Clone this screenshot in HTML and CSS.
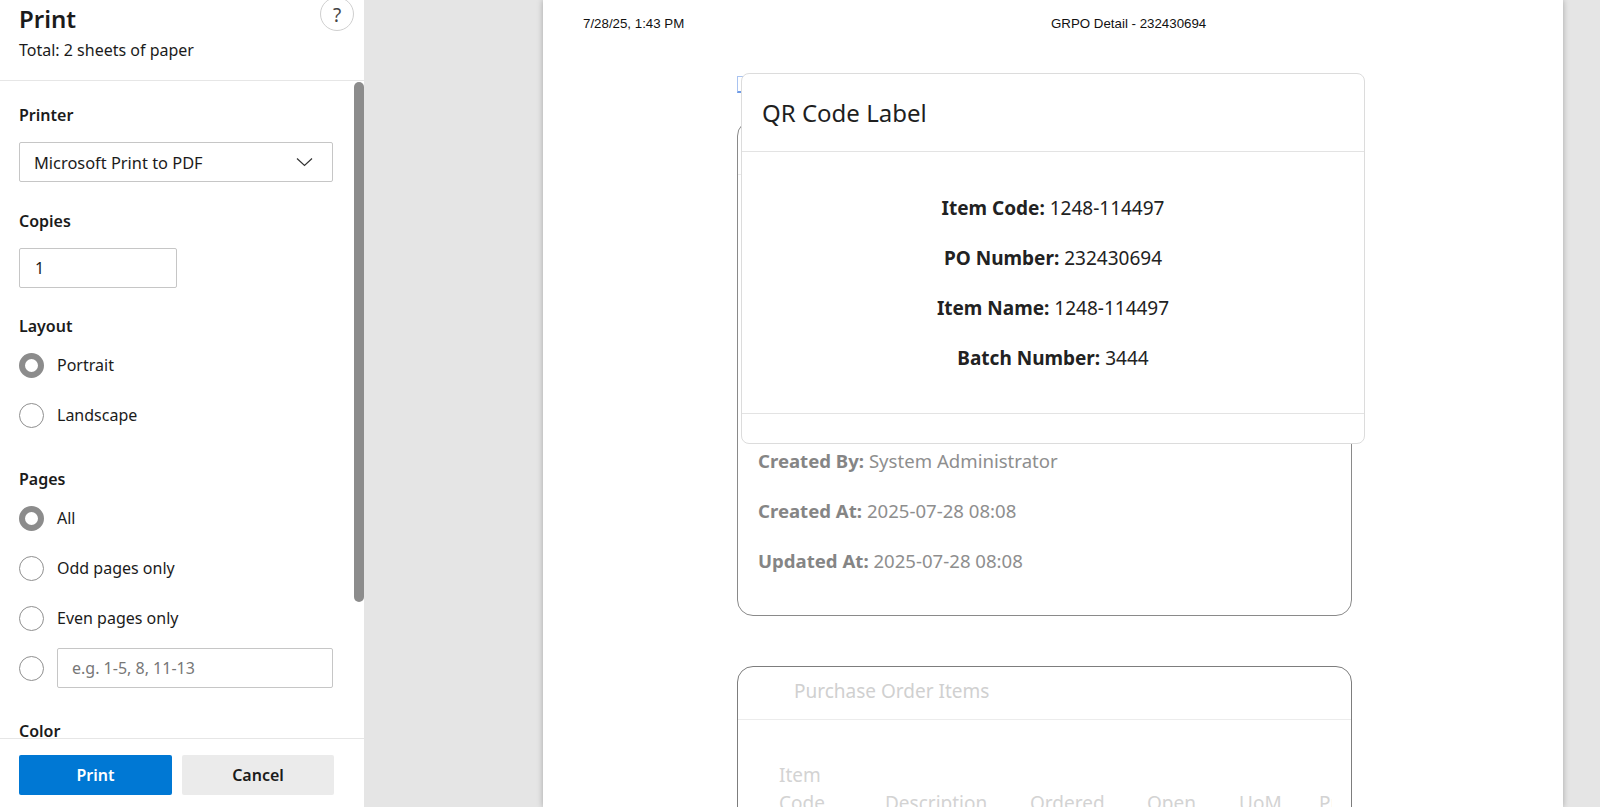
FILE: index.html
```html
<!DOCTYPE html>
<html lang="en">
<head>
<meta charset="utf-8">
<title>Print</title>
<link rel="stylesheet" href="styles.css">
</head>
<body>
<div class="app">
  <aside class="sidebar">
    <header class="side-head">
      <div class="head-text">
        <h1 class="title">Print</h1>
        <div class="subtitle">Total: 2 sheets of paper</div>
      </div>
      <button class="help" type="button">?</button>
    </header>
    <div class="side-body">
      <div class="settings">
        <section class="group first">
          <div class="label">Printer</div>
          <div class="select">
            <span>Microsoft Print to PDF</span>
            <svg class="chev" width="17" height="10" viewBox="0 0 17 10"><path d="M1 1.5 L8.5 8.5 L16 1.5" fill="none" stroke="#333" stroke-width="1.2"/></svg>
          </div>
        </section>
        <section class="group">
          <div class="label">Copies</div>
          <div class="copies">1</div>
        </section>
        <section class="group layout">
          <div class="label tight">Layout</div>
          <div class="radio-row"><span class="radio checked"></span><span>Portrait</span></div>
          <div class="radio-row"><span class="radio"></span><span>Landscape</span></div>
        </section>
        <section class="group">
          <div class="label tight">Pages</div>
          <div class="radio-row"><span class="radio checked"></span><span>All</span></div>
          <div class="radio-row"><span class="radio"></span><span>Odd pages only</span></div>
          <div class="radio-row"><span class="radio"></span><span>Even pages only</span></div>
          <div class="radio-row"><span class="radio"></span><span class="range">e.g. 1-5, 8, 11-13</span></div>
        </section>
        <section class="group color">
          <div class="label">Color</div>
        </section>
      </div>
      <div class="track"><div class="thumb"></div></div>
    </div>
    <footer class="side-foot">
      <button class="btn primary" type="button">Print</button>
      <button class="btn secondary" type="button">Cancel</button>
    </footer>
  </aside>

  <main class="preview">
    <div class="paper">
      <div class="print-head">
        <span class="date">7/28/25, 1:43 PM</span>
        <span class="doc">GRPO Detail - 232430694</span>
      </div>
      <div class="doc-body">
        <div class="link-row"><span class="back-link"></span></div>
        <div class="card">
          <div class="card-head">GRPO Information</div>
          <div class="card-body">
            <p><b>GRPO Number:</b> 232430694</p>
            <p><b>PO Number:</b> 232430694</p>
            <p><b>Supplier:</b> Supplier</p>
            <p><b>Status:</b> Open</p>
            <p><b>Remarks:</b> -</p>
            <p><b>Created By:</b> System Administrator</p>
            <p><b>Created At:</b> 2025-07-28 08:08</p>
            <p><b>Updated At:</b> 2025-07-28 08:08</p>
          </div>
        </div>
        <div class="card faded">
          <div class="card-head">Purchase Order Items</div>
          <div class="table-wrap">
            <div class="items">
              <div class="th c1">Item Code</div>
              <div class="th c2">Description</div>
              <div class="th c3">Ordered</div>
              <div class="th c4">Open</div>
              <div class="th c5">UoM</div>
              <div class="th c6">Price</div>
            </div>
          </div>
        </div>
      </div>

      <div class="modal">
        <div class="modal-head">QR Code Label</div>
        <div class="modal-body">
          <p><b>Item Code:</b> 1248-114497</p>
          <p><b>PO Number:</b> 232430694</p>
          <p><b>Item Name:</b> 1248-114497</p>
          <p><b>Batch Number:</b> 3444</p>
        </div>
        <div class="modal-foot"></div>
      </div>
    </div>
  </main>
</div>
</body>
</html>
```
FILE: styles.css
```css
* { box-sizing: border-box; }
html, body { margin: 0; padding: 0; }
body {
  width: 1600px;
  height: 807px;
  overflow: hidden;
  font-family: "Noto Sans", "Open Sans", sans-serif;
  color: #1b1b1b;
}
.app { display: flex; height: 807px; }

/* ---------- sidebar ---------- */
.sidebar {
  width: 364px;
  flex: none;
  background: #fff;
  display: flex;
  flex-direction: column;
}
.side-head {
  height: 81px;
  flex: none;
  border-bottom: 1px solid #e6e6e6;
  display: flex;
  justify-content: space-between;
  align-items: flex-start;
  padding: 0 10px 0 19px;
}
.head-text { padding-top: 3px; }
.title {
  margin: 0;
  font-size: 24px;
  line-height: 32px;
  font-weight: 600;
}
.subtitle {
  margin-top: 3.5px;
  font-size: 16px;
  line-height: 22px;
}
.help {
  margin-top: -3px;
  width: 34px;
  height: 34px;
  border-radius: 50%;
  border: 1px solid #cfcfcf;
  background: #fff;
  color: #444;
  font-family: "Noto Sans", sans-serif;
  font-size: 19px;
  line-height: 30px;
  padding: 0;
  padding-top: 2px;
  text-align: center;
}
.side-body {
  flex: 1;
  display: flex;
  overflow: hidden;
}
.settings {
  width: 354px;
  padding: 0 21px 0 19px;
  overflow: hidden;
}
.track { width: 10px; flex: none; padding-top: 1px; }
.thumb {
  width: 10px;
  height: 520px;
  background: #8c8c8c;
  border-radius: 5px;
}
.group { margin-top: 28px; }
.group.first { margin-top: 23px; }
.group.layout { margin-top: 27px; }
.group.color { margin-top: 27px; }
.label {
  font-size: 16px;
  line-height: 22px;
  font-weight: 600;
  margin-bottom: 16px;
}
.label.tight { margin-bottom: 3px; }
.select {
  height: 40px;
  border: 1px solid #c6c6c6;
  border-radius: 2px;
  display: flex;
  align-items: center;
  justify-content: space-between;
  padding: 0 19px 0 14px;
  font-size: 16.4px;
}
.copies {
  width: 158px;
  height: 40px;
  border: 1px solid #c6c6c6;
  border-radius: 2px;
  padding-left: 15px;
  display: flex;
  align-items: center;
  font-size: 16px;
}
.radio-row {
  height: 50px;
  display: flex;
  align-items: center;
  gap: 13px;
  font-size: 16px;
}
.radio {
  width: 25px;
  height: 25px;
  flex: none;
  border-radius: 50%;
  border: 1px solid #8f8f8f;
  background: #fff;
}
.radio.checked { border: 6.5px solid #8c8c8c; }
.range {
  flex: 1;
  height: 40px;
  border: 1px solid #c6c6c6;
  border-radius: 2px;
  padding-left: 14px;
  display: flex;
  align-items: center;
  color: #777;
}
.side-foot {
  flex: none;
  height: 69px;
  border-top: 1px solid #e6e6e6;
  display: flex;
  gap: 10px;
  padding: 16px 30px 0 19px;
}
.btn {
  height: 40px;
  border: none;
  border-radius: 2px;
  font-family: "Noto Sans", sans-serif;
  font-size: 16px;
  font-weight: 600;
}
.btn.primary { width: 153px; background: #0078d4; color: #fff; }
.btn.secondary { width: 152px; background: #ebebeb; color: #1b1b1b; }

/* ---------- preview ---------- */
.preview {
  flex: 1;
  background: #e5e5e5;
  padding-left: 179px;
  overflow: hidden;
}
.paper {
  position: relative;
  width: 1020px;
  height: 807px;
  background: #fff;
  box-shadow: 0 0 6px rgba(0, 0, 0, 0.28);
  overflow: hidden;
}
.print-head {
  display: flex;
  padding: 15px 0 0 40px;
  font-family: "Liberation Sans", Arial, sans-serif;
  font-size: 13.3px;
  line-height: 17px;
  color: #111;
}
.date { width: 468px; }
.doc-body { padding-left: 194px; width: 809px; }
.link-row { height: 17px; margin-top: 44px; }
.back-link {
  display: block;
  height: 17px;
  width: 40px;
  border: 1px solid #a9c3f0;
  border-bottom: 2px solid #6f9be6;
}
.card {
  margin-top: 27px;
  width: 615px;
  border: 1px solid #8a8a8a;
  border-radius: 16px;
}
.card-head {
  height: 54px;
  border-bottom: 1px solid #ececec;
  padding: 13px 20px 0 20px;
  font-size: 20px;
  color: #888;
}
.card-body { padding: 11px 20px 29px 20px; }
.card-body p {
  margin: 0;
  font-size: 18.6px;
  line-height: 50px;
  color: #8e8e8e;
}
.card-body b { color: #858585; font-weight: 700; }
.card.faded { margin-top: 50px; height: 200px; border-color: #7d7d7d; }
.card.faded .card-head {
  height: 53px;
  padding: 11px 20px 0 56px;
  font-size: 19px;
  color: #d0d0d0;
  border-bottom: 1px solid #ececec;
}
.table-wrap {
  margin: 0 19px 0 41px;
  overflow: hidden;
}
.items {
  display: grid;
  grid-template-columns: 106px 145px 117px 92px 80px 60px;
  padding-top: 41px;
  align-items: end;
  font-size: 19px;
  line-height: 28px;
  color: #d3d3d3;
}
.th.c1 { width: 60px; }

/* ---------- modal ---------- */
.modal {
  position: absolute;
  left: 198px;
  top: 73px;
  width: 624px;
  height: 371px;
  background: #fff;
  border: 1px solid #dcdcdc;
  border-radius: 8px;
  display: flex;
  flex-direction: column;
}
.modal-head {
  height: 78px;
  border-bottom: 1px solid #e3e3e3;
  padding: 24px 20px 0 20px;
  font-size: 24px;
  line-height: 30px;
  color: #1f1f1f;
}
.modal-body {
  height: 262px;
  padding-top: 31px;
  border-bottom: 1px solid #e3e3e3;
  text-align: center;
}
.modal-body p {
  margin: 0;
  font-size: 19px;
  line-height: 50px;
  color: #222;
}
.modal-body b { font-weight: 700; }
.modal-foot { flex: 1; }
```
